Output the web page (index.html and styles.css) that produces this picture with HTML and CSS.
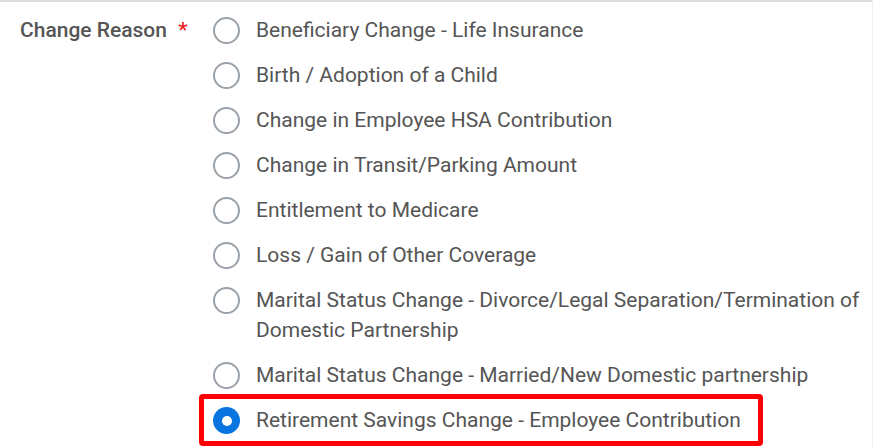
FILE: index.html
```html
<!DOCTYPE html>
<html lang="en">
<head>
    <meta charset="UTF-8">
    <title>Change Reason</title>
    <link rel="stylesheet" href="styles.css">
</head>
<body>
    <div class="formRow">
        <div class="fieldLabel">Change Reason <span class="required">*</span></div>
        <div class="options">
            <label class="option"><span class="radio"></span><span class="optionText">Beneficiary Change - Life Insurance</span></label>
            <label class="option"><span class="radio"></span><span class="optionText">Birth / Adoption of a Child</span></label>
            <label class="option"><span class="radio"></span><span class="optionText">Change in Employee HSA Contribution</span></label>
            <label class="option"><span class="radio"></span><span class="optionText">Change in Transit/Parking Amount</span></label>
            <label class="option"><span class="radio"></span><span class="optionText">Entitlement to Medicare</span></label>
            <label class="option"><span class="radio"></span><span class="optionText">Loss / Gain of Other Coverage</span></label>
            <label class="option"><span class="radio"></span><span class="optionText">Marital Status Change - Divorce/Legal Separation/Termination of Domestic Partnership</span></label>
            <label class="option"><span class="radio"></span><span class="optionText">Marital Status Change - Married/New Domestic partnership</span></label>
            <label class="option selected"><span class="radio checked"></span><span class="optionText">Retirement Savings Change - Employee Contribution</span></label>
        </div>
    </div>
</body>
</html>
```

FILE: styles.css
```css
body {
    margin: 0;
    background: #fff;
    color: #555;
    font-family: Roboto, 'Liberation Sans', sans-serif;
    border-top: 2px solid #dcdcdc;
    border-right: 1px solid #f0f0f0;
    height: 445px;
    overflow: hidden;
}

.formRow {
    display: flex;
    padding: 13px 0 0 20px;
}

.fieldLabel {
    width: 193px;
    font-size: 21px;
    font-weight: 500;
    line-height: 30px;
    color: #555;
}

.required {
    color: #e8231d;
    margin-left: 6px;
}

.options {
    display: flex;
    flex-direction: column;
    gap: 15px;
    width: 650px;
}

.option {
    display: flex;
    align-items: flex-start;
    gap: 16px;
    font-size: 21px;
    line-height: 30px;
    color: #555;
}

.radio {
    flex: none;
    width: 23px;
    height: 23px;
    margin-top: 2px;
    border: 2px solid #9aa1a8;
    border-radius: 50%;
    background: #fff;
}

.radio.checked {
    width: 27px;
    height: 27px;
    margin-top: 2px;
    border: none;
    background: #0875e1;
    display: flex;
    align-items: center;
    justify-content: center;
}

.radio.checked::after {
    content: "";
    width: 10px;
    height: 10px;
    border-radius: 50%;
    background: #fff;
}

.option.selected {
    align-self: flex-start;
    border: 5px solid #fe0000;
    border-radius: 4px;
    padding: 6px 17px 6px 9px;
    margin: -11px 0 0 -14px;
}
```
